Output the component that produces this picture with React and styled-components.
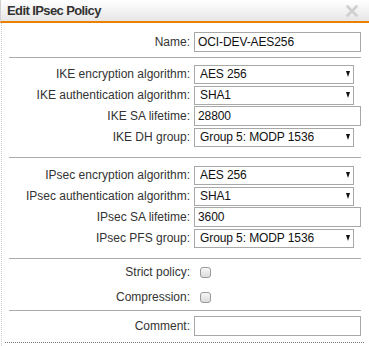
import React from 'react'
import styled, { createGlobalStyle } from 'styled-components'

const GlobalStyle = createGlobalStyle`
  html, body {
    margin: 0;
    padding: 0;
    background: #fff;
  }
  body {
    font-family: "Liberation Sans", Arial, sans-serif;
    font-size: 12px;
    color: #333;
  }
`

const Dialog = styled.div`
  width: 369px;
  height: 346px;
  background: #fff;
`

const TitleBar = styled.div`
  height: 21px;
  display: flex;
  align-items: center;
  justify-content: space-between;
  padding: 0 11px 0 6px;
  background: linear-gradient(#ffffff, #e6e6e6);
  border-left: 1px solid #d0d0d0;
  border-bottom: 2px solid #e98204;
`

const Title = styled.h1`
  margin: 0;
  font-size: 13px;
  font-weight: bold;
  color: #333;
  letter-spacing: -0.6px;
`

const Close = styled.span`
  width: 12px;
  height: 12px;
  display: flex;
`

const Body = styled.div`
  margin-left: 1px;
  border-left: 1px dotted #ccc;
  padding: 0 8px 0 7px;
  height: 323px;
  display: flex;
  flex-direction: column;
`

const Section = styled.div`
  display: grid;
  grid-template-columns: 181px 1fr;
  column-gap: 4px;
  row-gap: 1px;
  grid-auto-rows: ${p => p.rowH || 20}px;
  align-items: center;
  padding: ${p => p.pad};
  border-bottom: 1px solid #ababab;
`

const LastSection = styled(Section)`
  border-bottom: none;
`

const Label = styled.label`
  text-align: right;
  white-space: nowrap;
  color: #333;
`

const TextInput = styled.div`
  box-sizing: border-box;
  height: 20px;
  width: 167px;
  border: 1px solid #a8a8a8;
  padding: 0 3px;
  display: flex;
  align-items: center;
  color: #111;
  letter-spacing: -0.1px;
`

const Select = styled.div`
  box-sizing: border-box;
  height: 19px;
  width: 160px;
  border: 1px solid #a8a8a8;
  padding: 0 3px 0 5px;
  display: flex;
  align-items: center;
  justify-content: space-between;
  color: #111;
  letter-spacing: -0.1px;
`

const Arrow = styled.span`
  width: 0;
  height: 0;
  border-left: 2.5px solid transparent;
  border-right: 2.5px solid transparent;
  border-top: 6px solid #111;
`

const Check = styled.span`
  box-sizing: border-box;
  width: 11px;
  height: 11px;
  border: 1px solid #9a9a9a;
  border-radius: 3px;
  background: linear-gradient(#f6f6f6, #dcdcdc);
  margin-left: 6px;
`

const Footer = styled.div`
  margin: 6px -3px 0 -4px;
  border-bottom: 1px dotted #777;
`

const SelectField = ({ value }) => (
  <Select>
    <span>{value}</span>
    <Arrow />
  </Select>
)

export default function App() {
  return (
    <Dialog>
      <GlobalStyle />
      <TitleBar>
        <Title>Edit IPsec Policy</Title>
        <Close>
          <svg width="12" height="12" viewBox="0 0 12 12">
            <path d="M1.5 1.5 L10.5 10.5 M10.5 1.5 L1.5 10.5" stroke="#cfcfcf" strokeWidth="2.6" strokeLinecap="round" />
          </svg>
        </Close>
      </TitleBar>
      <Body>
        <Section pad="9px 0 5px">
          <Label>Name:</Label>
          <TextInput>OCI-DEV-AES256</TextInput>
        </Section>
        <Section pad="6px 0 10px">
          <Label>IKE encryption algorithm:</Label>
          <SelectField value="AES 256" />
          <Label>IKE authentication algorithm:</Label>
          <SelectField value="SHA1" />
          <Label>IKE SA lifetime:</Label>
          <TextInput>28800</TextInput>
          <Label>IKE DH group:</Label>
          <SelectField value="Group 5: MODP 1536" />
        </Section>
        <Section pad="7px 0 10px">
          <Label>IPsec encryption algorithm:</Label>
          <SelectField value="AES 256" />
          <Label>IPsec authentication algorithm:</Label>
          <SelectField value="SHA1" />
          <Label>IPsec SA lifetime:</Label>
          <TextInput>3600</TextInput>
          <Label>IPsec PFS group:</Label>
          <SelectField value="Group 5: MODP 1536" />
        </Section>
        <Section pad="1px 0 1px" rowH={24}>
          <Label>Strict policy:</Label>
          <Check />
          <Label>Compression:</Label>
          <Check />
        </Section>
        <LastSection pad="5px 0 0">
          <Label>Comment:</Label>
          <TextInput />
        </LastSection>
        <Footer />
      </Body>
    </Dialog>
  )
}
